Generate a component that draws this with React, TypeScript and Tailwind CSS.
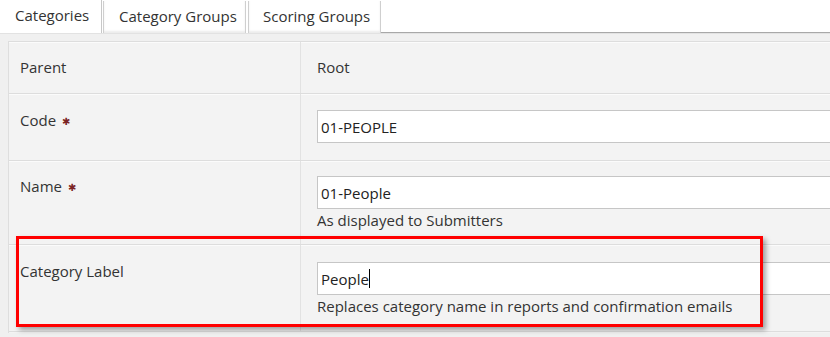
import React from 'react';

const font = { fontFamily: '"Open Sans", "Liberation Sans", sans-serif' };

function Required() {
  return (
    <span
      className="ml-[6px] text-[10px] text-[#7b2424] align-[1px]"
      style={{ fontFamily: '"DejaVu Sans", sans-serif' }}
    >
      ✱
    </span>
  );
}

type RowProps = {
  label: string;
  required?: boolean;
  children: React.ReactNode;
  pad: string;
};

function Row({ label, required, children, pad }: RowProps) {
  return (
    <div className="flex border-t border-[#dddddd] shadow-[inset_0_1px_0_#fbfbfb]">
      <div className={`w-[292px] shrink-0 pl-[11px] border-r border-[#e2e2e2] ${pad}`}>
        {label}
        {required && <Required />}
      </div>
      <div className={`flex-1 pl-[16px] ${pad}`}>{children}</div>
    </div>
  );
}

function Input({ value, caret }: { value: string; caret?: boolean }) {
  return (
    <div className="h-[33px] w-[600px] bg-white border border-[#c6c6c6] pl-[3px] flex items-center text-[#222]">
      {value}
      {caret && <span className="inline-block w-px h-[19px] bg-black" />}
    </div>
  );
}

export default function App() {
  return (
    <div className="w-[830px] h-[337px] overflow-hidden bg-white text-[15px] leading-5 text-[#333]" style={font}>
      <div className="relative h-[337px]">
        {/* tabs */}
        <div className="flex h-[33px] items-end">
          <div className="h-[33px] w-[102px] bg-white border-r border-[#c8c8c8] pl-[15px] pt-[5px] text-[#333]">
            Categories
          </div>
          <div className="h-[32px] ml-[1px] w-[143px] bg-white border-x border-[#cfcfcf] pl-[15px] pt-[5px] shadow-[inset_0_-2px_2px_#ececec]">
            Category Groups
          </div>
          <div className="h-[32px] ml-[2px] w-[133px] bg-white border-x border-[#cfcfcf] pl-[14px] pt-[5px] shadow-[inset_0_-2px_2px_#ececec]">
            Scoring Groups
          </div>
          <div className="flex-1 h-px bg-[#a8a8a8] self-end" />
        </div>

        {/* panel */}
        <div className="bg-[#f0f0f0] pl-[8px] pt-[8px] h-[304px] shadow-[inset_0_1px_0_#e2e2e2]">
          <div className="border-l border-[#dedede] bg-[#f3f3f3] pb-[1px]">
            <Row label="Parent" pad="pt-[15px] pb-[16px]">
              Root
            </Row>
            <Row label="Code" required pad="pt-[16px] pb-[17px]">
              <Input value="01-PEOPLE" />
            </Row>
            <Row label="Name" required pad="pt-[15px] pb-[14px]">
              <Input value="01-People" />
              <div className="mt-px">As displayed to Submitters</div>
            </Row>
            <Row label="Category Label" pad="pt-[16px] pb-[15px]">
              <div className="mt-[1px]">
                <Input value="People" caret />
              </div>
              <div className="mt-px">Replaces category name in reports and confirmation emails</div>
            </Row>
            <div className="border-t border-[#dddddd]" />
          </div>
        </div>

        {/* annotation */}
        <div className="absolute left-[16px] top-[236px] w-[747px] h-[91px] border-[3px] border-[#ff0000] shadow-[3px_3px_5px_rgba(0,0,0,0.35)] pointer-events-none" />
      </div>
    </div>
  );
}
